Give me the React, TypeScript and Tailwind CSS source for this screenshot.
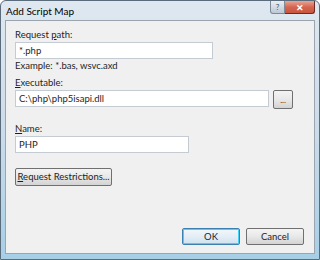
export default function App() {
  const font = { fontFamily: 'Lato, "Noto Sans", Arial, sans-serif' };

  return (
    <div
      className="w-[320px] h-[260px] flex flex-col border border-[#5a6b7c] rounded-t-[6px] bg-gradient-to-b from-[#dfe8f0] via-[#cddcea] to-[#a6cfe6] text-[#1e1e1e] text-[9.5px] overflow-hidden"
      style={font}
    >
      {/* 타이틀 바 */}
      <div className="h-[19px] flex items-start justify-between pl-[5px] pr-[4px] shrink-0">
        <span className="mt-[4px] text-[10px] leading-[13px] text-black">Add Script Map</span>
        <div className="flex">
          <div className="w-[15px] h-[13px] rounded-bl-[3px] border border-t-0 border-[#7d8a98] bg-gradient-to-b from-[#e9eef3] to-[#bdc8d4] flex items-center justify-center text-[8px] leading-none text-[#4a5563]">
            ?
          </div>
          <div className="w-[30px] h-[13px] rounded-br-[3px] border border-l-0 border-t-0 border-[#6b2a22] bg-gradient-to-b from-[#e8a496] via-[#d46650] to-[#c9543b] flex items-center justify-center text-[9px] font-bold leading-none text-white">
            ✕
          </div>
        </div>
      </div>

      {/* 본문 패널 */}
      <div className="flex-1 mx-[4px] mb-[5px] border border-[#9aa5b0] bg-[#f0f0f0] flex flex-col pl-[9px] pr-[10px] pt-[8px] pb-[8px]">
        <label className="leading-[12px]">
          Request <span className="underline">p</span>ath:
        </label>
        <div className="mt-[1px] w-[198px] h-[17px] bg-white border border-[#c5cbd2] flex items-center px-[3px] leading-none">
          *.php
        </div>
        <div className="mt-[1px] leading-[12px]">Example: *.bas, wsvc.axd</div>

        <label className="mt-[5px] leading-[12px]">
          <span className="underline">E</span>xecutable:
        </label>
        <div className="mt-[1px] flex items-start gap-[4px]">
          <div className="w-[254px] h-[17px] bg-white border border-[#c5cbd2] flex items-center px-[3px] leading-none">
            C:\php\php5isapi.dll
          </div>
          <div className="w-[20px] h-[19px] rounded-[2px] border border-[#707070] bg-gradient-to-b from-[#f4f4f4] via-[#e8e8e8] to-[#d3d3d3] flex items-center justify-center text-[8px] leading-none">
            ...
          </div>
        </div>

        <label className="mt-[14px] leading-[12px]">
          <span className="underline">N</span>ame:
        </label>
        <div className="mt-[1px] w-[174px] h-[17px] bg-white border border-[#c5cbd2] flex items-center px-[3px] leading-none">
          PHP
        </div>

        <div className="mt-[15px] w-[97px] h-[18px] rounded-[2px] border border-[#707070] bg-gradient-to-b from-[#f4f4f4] via-[#e8e8e8] to-[#d3d3d3] flex items-center justify-center leading-none whitespace-nowrap">
          <span>
            <span className="underline">R</span>equest Restrictions...
          </span>
        </div>

        <div className="mt-auto flex justify-end gap-[6px]">
          <div className="w-[58px] h-[17px] rounded-[2px] border border-[#3c7fb1] bg-gradient-to-b from-[#f2f8fc] via-[#e4eef6] to-[#cfe1ee] flex items-center justify-center leading-none shadow-[inset_0_0_0_1px_#48d0f7]">
            OK
          </div>
          <div className="w-[58px] h-[17px] rounded-[2px] border border-[#707070] bg-gradient-to-b from-[#f4f4f4] via-[#e8e8e8] to-[#d3d3d3] flex items-center justify-center leading-none">
            Cancel
          </div>
        </div>
      </div>
    </div>
  );
}
